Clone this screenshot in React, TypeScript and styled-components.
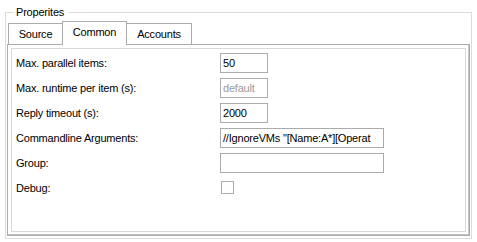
import React from 'react'
import styled, { createGlobalStyle } from 'styled-components'

const GlobalStyle = createGlobalStyle`
  html, body {
    margin: 0;
    padding: 0;
    background: #ffffff;
  }
  body {
    font-family: 'Liberation Sans', Arial, sans-serif;
    font-size: 11px;
    color: #000000;
  }
`

const Page = styled.div`
  width: 477px;
  height: 242px;
  box-sizing: border-box;
  padding: 6px 0 0 5px;
  letter-spacing: -0.2px;
`

const GroupBox = styled.fieldset`
  margin: 0;
  padding: 0 1px 2px 1px;
  width: 467px;
  box-sizing: border-box;
  border: 1px solid #dcdcdc;
  min-width: 0;
`

const Legend = styled.legend`
  margin-left: 7px;
  padding: 0 4px 0 2px;
  line-height: 13px;
  font-size: 11px;
`

const TabStrip = styled.div`
  display: flex;
  align-items: flex-end;
  height: 23px;
  margin-top: 2px;
  padding-left: 1px;
`

const Tab = styled.div<{ $active?: boolean; $w: number }>`
  box-sizing: border-box;
  width: ${p => p.$w}px;
  height: ${p => (p.$active ? 24 : 21)}px;
  margin-bottom: ${p => (p.$active ? -1 : 0)}px;
  margin-left: -1px;
  position: relative;
  z-index: ${p => (p.$active ? 2 : 1)};
  border: 1px solid #acacac;
  border-bottom: none;
  background: #ffffff;
  display: flex;
  align-items: center;
  justify-content: center;
  padding-bottom: ${p => (p.$active ? 3 : 0)}px;
  &:first-child {
    margin-left: 0;
  }
`

const TabPanel = styled.div`
  box-sizing: border-box;
  height: 192px;
  border: 1px solid #acacac;
  padding: 3px;
  box-shadow: inset -1px -1px 0 #c4c4c4;
`

const InnerBox = styled.div`
  box-sizing: border-box;
  height: 100%;
  border: 1px solid #d9d9d9;
  padding: 4px 0 0 4px;
  display: grid;
  grid-template-columns: 204px 1fr;
  grid-auto-rows: 20px;
  row-gap: 5px;
  align-content: start;
`

const Label = styled.div`
  display: flex;
  align-items: center;
  height: 20px;
`

const Field = styled.div<{ $w: number; $muted?: boolean }>`
  box-sizing: border-box;
  width: ${p => p.$w}px;
  height: 20px;
  border: 1px solid #ababab;
  padding: 0 2px;
  display: flex;
  align-items: center;
  white-space: nowrap;
  overflow: hidden;
  color: ${p => (p.$muted ? '#9a9a9a' : '#000000')};
`

const Check = styled.div`
  box-sizing: border-box;
  width: 13px;
  height: 13px;
  margin: 3px 0 0 1px;
  border: 1px solid #adadad;
  background: #ffffff;
`

const rows: { label: string; value?: string; w?: number; muted?: boolean; check?: boolean }[] = [
  { label: 'Max. parallel items:', value: '50', w: 48 },
  { label: 'Max. runtime per item (s):', value: 'default', w: 48, muted: true },
  { label: 'Reply timeout (s):', value: '2000', w: 48 },
  { label: 'Commandline Arguments:', value: '//IgnoreVMs "[Name:A*][Operat', w: 164 },
  { label: 'Group:', value: '', w: 164 },
  { label: 'Debug:', check: true },
]

export default function App() {
  return (
    <Page>
      <GlobalStyle />
      <GroupBox>
        <Legend>Properites</Legend>
        <TabStrip>
          <Tab $w={55}>Source</Tab>
          <Tab $w={65} $active>Common</Tab>
          <Tab $w={66}>Accounts</Tab>
        </TabStrip>
        <TabPanel>
          <InnerBox>
            {rows.map(r => (
              <React.Fragment key={r.label}>
                <Label>{r.label}</Label>
                {r.check ? (
                  <div>
                    <Check />
                  </div>
                ) : (
                  <Field $w={r.w ?? 48} $muted={r.muted}>
                    {r.value}
                  </Field>
                )}
              </React.Fragment>
            ))}
          </InnerBox>
        </TabPanel>
      </GroupBox>
    </Page>
  )
}
